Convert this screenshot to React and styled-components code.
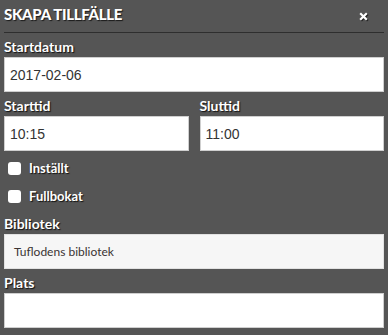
import React, { useState } from 'react';
import styled, { createGlobalStyle } from 'styled-components';

const GlobalStyle = createGlobalStyle`
  html, body {
    margin: 0;
    padding: 0;
    background: #555555;
  }
  * {
    box-sizing: border-box;
  }
`;

const Panel = styled.div`
  width: 388px;
  height: 335px;
  background: #555555;
  padding: 0 4px;
  font-family: Lato, "Open Sans", sans-serif;
  color: #fff;
  overflow: hidden;
`;

const Header = styled.div`
  display: flex;
  align-items: flex-start;
  justify-content: space-between;
  height: 33px;
  padding-top: 6px;
  border-bottom: 1px solid #2e2e2e;
`;

const Title = styled.h2`
  margin: 0;
  font-size: 15px;
  line-height: 16px;
  font-weight: 900;
  letter-spacing: -0.3px;
  text-shadow: 1px 1px 1px #1a1a1a;
`;

const Close = styled.button`
  border: none;
  background: none;
  padding: 0;
  margin: 3px 16px 0 0;
  width: 9px;
  height: 9px;
  cursor: pointer;
  filter: drop-shadow(1px 1px 0 #222);
`;

const Field = styled.div`
  margin-top: 6px;
`;

const Label = styled.label`
  display: block;
  font-size: 14px;
  line-height: 16px;
  font-weight: 700;
  margin-bottom: 2px;
  text-shadow: 1px 1px 1px #111;
`;

const TextInput = styled.input`
  display: block;
  width: 100%;
  height: 35px;
  margin: 0;
  padding: 0 5px;
  border: 1px solid #cfcfcf;
  border-radius: 0;
  background: #fff;
  font-family: "Liberation Sans", Arial, sans-serif;
  font-size: 14px;
  color: #333;
  outline: none;
`;

const ReadOnlyBox = styled.div`
  height: 35px;
  display: flex;
  align-items: center;
  padding: 0 9px;
  background: #f6f6f6;
  border: 1px solid #e2e2e2;
  font-size: 12px;
  color: #3a3333;
`;

const TimeRow = styled.div`
  display: grid;
  grid-template-columns: 1fr 1fr;
  column-gap: 11px;
`;

const Checks = styled.div`
  margin-top: 3px;
`;

const CheckRow = styled.label`
  display: flex;
  align-items: center;
  height: 28px;
  padding-left: 4px;
  font-size: 13px;
  font-weight: 700;
  text-shadow: 1px 1px 1px #111;
  cursor: pointer;
`;

const Box = styled.input`
  appearance: none;
  -webkit-appearance: none;
  width: 13px;
  height: 13px;
  margin: 0 8px 0 0;
  border-radius: 3px;
  background: #fff;
  border: none;

  &:checked {
    background: #fff radial-gradient(circle, #555 0 3px, transparent 3.5px);
  }
`;

function Checkbox({ label, checked, onChange }) {
  return (
    <CheckRow>
      <Box type="checkbox" checked={checked} onChange={onChange} />
      {label}
    </CheckRow>
  );
}

export default function App() {
  const [form, setForm] = useState({
    date: '2017-02-06',
    start: '10:15',
    end: '11:00',
    cancelled: false,
    full: false,
    place: ''
  });

  const handleChange = (e) => {
    const { name, value } = e.target;
    setForm((prev) => ({ ...prev, [name]: value }));
  };

  const toggle = (name) => () =>
    setForm((prev) => ({ ...prev, [name]: !prev[name] }));

  return (
    <>
      <GlobalStyle />
      <Panel>
        <Header>
          <Title>SKAPA TILLFÄLLE</Title>
          <Close aria-label="Stäng">
            <svg width="9" height="9" viewBox="0 0 9 9">
              <path d="M1.2 1.2 L7.8 7.8 M7.8 1.2 L1.2 7.8" stroke="#fff" strokeWidth="2.2" strokeLinecap="butt" />
            </svg>
          </Close>
        </Header>

        <Field>
          <Label>Startdatum</Label>
          <TextInput name="date" value={form.date} onChange={handleChange} />
        </Field>

        <TimeRow>
          <Field>
            <Label>Starttid</Label>
            <TextInput name="start" value={form.start} onChange={handleChange} />
          </Field>
          <Field>
            <Label>Sluttid</Label>
            <TextInput name="end" value={form.end} onChange={handleChange} />
          </Field>
        </TimeRow>

        <Checks>
          <Checkbox label="Inställt" checked={form.cancelled} onChange={toggle('cancelled')} />
          <Checkbox label="Fullbokat" checked={form.full} onChange={toggle('full')} />
        </Checks>

        <Field>
          <Label>Bibliotek</Label>
          <ReadOnlyBox>Tuflodens bibliotek</ReadOnlyBox>
        </Field>

        <Field>
          <Label>Plats</Label>
          <TextInput name="place" value={form.place} onChange={handleChange} />
        </Field>
      </Panel>
    </>
  );
}
